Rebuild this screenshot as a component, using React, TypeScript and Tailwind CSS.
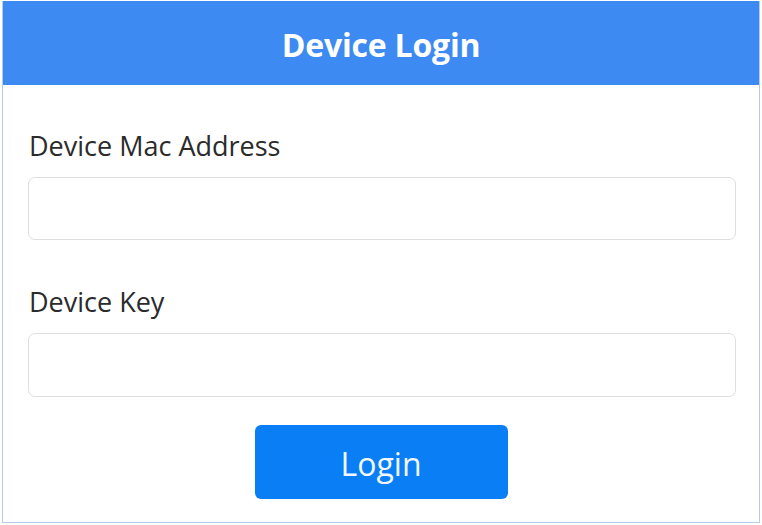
export default function App() {
  return (
    <div className="w-[762px] h-[525px] bg-white px-[2px] pt-[1px] pb-[2px] font-['Open_Sans',sans-serif]">
      <div className="h-full border border-[#b5cde8] border-t-0 flex flex-col">
        <div className="h-[84px] bg-[#3d8bf2] flex items-center justify-center pt-[3px]">
          <h1 className="text-white text-[32px] leading-[40px] font-bold tracking-[-0.2px]">Device Login</h1>
        </div>
        <div className="flex-1 px-[25px] pt-[43px]">
          <label className="block text-[27px] leading-[36px] text-[#2b2b2b] pl-[1px]">
            Device Mac Address
          </label>
          <input className="mt-[13px] block w-[708px] h-[63px] rounded-[7px] border border-[#dedede] outline-none" />
          <label className="mt-[44px] block text-[27px] leading-[36px] text-[#2b2b2b] pl-[1px]">
            Device Key
          </label>
          <input className="mt-[13px] block w-[708px] h-[64px] rounded-[7px] border border-[#dedede] outline-none" />
          <div className="mt-[28px] flex justify-center">
            <button className="w-[253px] h-[74px] rounded-[6px] bg-[#0a7ff5] text-[#f2f8ff] text-[32px] leading-[40px] pt-[3px]">
              Login
            </button>
          </div>
        </div>
      </div>
    </div>
  )
}
